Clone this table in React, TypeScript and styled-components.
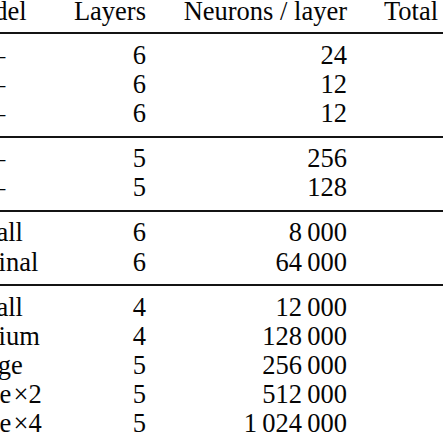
import React from "react";
import styled, { createGlobalStyle } from "styled-components";

const Global = createGlobalStyle`
  html, body {
    margin: 0;
    padding: 0;
    background: #ffffff;
    overflow: hidden;
  }
  body {
    font-family: "Liberation Serif", "DejaVu Serif", serif;
    font-size: 26.5px;
    color: #050505;
  }
`;

const Table = styled.div`
  margin-left: -50px;
  width: 520px;
  display: flex;
  flex-direction: column;
`;

const Header = styled.div`
  margin-top: -3.5px;
  padding-bottom: 6.5px;
  border-bottom: 2px solid #141414;
`;

const Group = styled.div<{ $last?: boolean }>`
  padding: 6.5px 0 7.3px;
  border-bottom: ${(p) => (p.$last ? "none" : "2px solid #141414")};
`;

const Row = styled.div`
  display: grid;
  grid-template-columns: 84px 112px 201px 1fr;
  line-height: 29.2px;
  white-space: nowrap;
`;

const NameCell = styled.div`
  text-align: center;
`;

const NumCell = styled.div`
  text-align: right;
`;

const TotalCell = styled.div`
  text-align: left;
  padding-left: 37px;
`;

type R = [string, string, string];

const groups: R[][] = [
  [
    ["\u2014", "6", "24"],
    ["\u2014", "6", "12"],
    ["\u2014", "6", "12"],
  ],
  [
    ["\u2014", "5", "256"],
    ["\u2014", "5", "128"],
  ],
  [
    ["Small", "6", "8\u2009000"],
    ["Original", "6", "64\u2009000"],
  ],
  [
    ["Small", "4", "12\u2009000"],
    ["Medium", "4", "128\u2009000"],
    ["Large", "5", "256\u2009000"],
    ["Large\u200a\u00d72", "5", "512\u2009000"],
    ["Large\u200a\u00d74", "5", "1\u2009024\u2009000"],
  ],
];

export default function App() {
  return (
    <>
      <Global />
      <Table>
        <Header>
          <Row>
            <NameCell>Model</NameCell>
            <NumCell>Layers</NumCell>
            <NumCell>Neurons / layer</NumCell>
            <TotalCell>Total</TotalCell>
          </Row>
        </Header>
        {groups.map((g, gi) => (
          <Group key={gi} $last={gi === groups.length - 1}>
            {g.map((r, ri) => (
              <Row key={ri}>
                <NameCell>{r[0]}</NameCell>
                <NumCell>{r[1]}</NumCell>
                <NumCell>{r[2]}</NumCell>
                <TotalCell />
              </Row>
            ))}
          </Group>
        ))}
      </Table>
    </>
  );
}
